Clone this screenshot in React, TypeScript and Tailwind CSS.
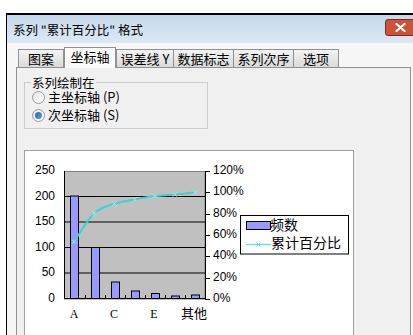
import React from "react";

const cjk = { fontFamily: '"Noto Sans CJK SC", "Liberation Sans", sans-serif' };

function Tab({ label, w, selected, className = "" }: { label: string; w: number; selected?: boolean; className?: string }) {
  if (selected) {
    return (
      <div
        className={`relative z-10 -mb-px flex h-[21px] items-start justify-center border border-b-0 border-[#8e9297] bg-[#fbfbfb] pt-[1px] text-[13px] leading-[16px] text-black ${className}`}
        style={{ width: w }}
      >
        {label}
      </div>
    );
  }
  return (
    <div
      className={`flex h-[18px] items-center justify-center border border-b-0 border-[#8e9297] bg-gradient-to-b from-[#f3f3f3] to-[#dadada] text-[13px] leading-[16px] text-black ${className}`}
      style={{ width: w }}
    >
      {label}
    </div>
  );
}

function Radio({ checked, label }: { checked?: boolean; label: string }) {
  return (
    <div className="flex h-[18px] items-center">
      <div className="ml-[7px] flex h-[13px] w-[13px] items-center justify-center rounded-full border border-[#9a9a9a] bg-gradient-to-br from-[#e4e4e4] to-[#ffffff]">
        {checked && <div className="h-[7px] w-[7px] rounded-full bg-gradient-to-br from-[#2a64a8] to-[#5fa0e0]" />}
      </div>
      <span className="ml-[3px] text-[13px] leading-[14px] text-black">{label}</span>
    </div>
  );
}

const pts: [number, number][] = [
  [74, 240.8],
  [94.2, 212.2],
  [114.4, 202.7],
  [134.5, 198.5],
  [154.6, 195.1],
  [174.8, 193.6],
  [195, 191.3],
];

function smoothPath(p: [number, number][]) {
  let d = `M${p[0][0]},${p[0][1]}`;
  for (let i = 0; i < p.length - 1; i++) {
    const p0 = p[i - 1] || p[i];
    const p1 = p[i];
    const p2 = p[i + 1];
    const p3 = p[i + 2] || p2;
    const c1x = p1[0] + (p2[0] - p0[0]) / 6;
    const c1y = p1[1] + (p2[1] - p0[1]) / 6;
    const c2x = p2[0] - (p3[0] - p1[0]) / 6;
    const c2y = p2[1] - (p3[1] - p1[1]) / 6;
    d += ` C${c1x},${c1y} ${c2x},${c2y} ${p2[0]},${p2[1]}`;
  }
  return d;
}

const bars = [
  { x: 70, top: 195 },
  { x: 91, top: 246.5 },
  { x: 111, top: 281 },
  { x: 131, top: 290 },
  { x: 151, top: 292.5 },
  { x: 171, top: 295 },
  { x: 191, top: 294 },
];

function Chart() {
  const grid = [195.5, 221, 246.5, 272];
  const leftLabels = [
    ["250", 170],
    ["200", 195.5],
    ["150", 221],
    ["100", 246.5],
    ["50", 272],
    ["0", 298],
  ];
  const rightTicks = [170, 191.3, 212.7, 234, 255.3, 276.7, 298];
  const rightLabels = ["120%", "100%", "80%", "60%", "40%", "20%", "0%"];
  return (
    <svg width={330} height={184} viewBox="24 149 330 184" className="block">
      <rect x={64.5} y={170.5} width={140.5} height={127.5} fill="#c0c0c0" stroke="#808080" />
      {grid.map((y) => (
        <line key={y} x1={64} x2={205} y1={y} y2={y} stroke="#000" strokeWidth={1} />
      ))}
      <line x1={64.5} x2={64.5} y1={170} y2={298} stroke="#000" />
      <line x1={205.5} x2={205.5} y1={170} y2={298} stroke="#000" />
      <line x1={64} x2={206} y1={297.5} y2={297.5} stroke="#000" />
      {[85, 105, 125, 145, 165, 185].map((x) => (
        <line key={x} x1={x + 0.5} x2={x + 0.5} y1={294} y2={298} stroke="#000" />
      ))}
      {rightTicks.map((y) => (
        <line key={y} x1={205} x2={210} y1={Math.round(y) + 0.5} y2={Math.round(y) + 0.5} stroke="#000" />
      ))}
      {bars.map((b) => (
        <rect key={b.x} x={b.x + 0.5} y={b.top} width={8} height={297.5 - b.top} fill="#9999ff" stroke="#000" />
      ))}
      <path d={smoothPath(pts)} fill="none" stroke="#38d4d4" strokeWidth={2} />
      {pts.map(([x, y]) => (
        <path key={x} d={`M${x - 2},${y - 2} L${x + 2},${y + 2} M${x - 2},${y + 2} L${x + 2},${y - 2}`} stroke="#9ff0f0" strokeWidth={1} />
      ))}
      {leftLabels.map(([t, y]) => (
        <text key={t as string} x={55} y={y as number} textAnchor="end" dominantBaseline="middle" fontSize={12} fontFamily='"Liberation Sans", sans-serif' fill="#000">
          {t}
        </text>
      ))}
      {rightLabels.map((t, i) => (
        <text key={t} x={213} y={rightTicks[i]} dominantBaseline="middle" fontSize={12} fontFamily='"Liberation Sans", sans-serif' fill="#000">
          {t}
        </text>
      ))}
      {[
        ["A", 74],
        ["C", 114],
        ["E", 154],
      ].map(([t, x]) => (
        <text key={t as string} x={x as number} y={314} textAnchor="middle" dominantBaseline="middle" fontSize={12} fontFamily='"Liberation Serif", serif' fill="#000">
          {t}
        </text>
      ))}
      <text x={194} y={313} textAnchor="middle" dominantBaseline="middle" fontSize={13} fontFamily='"Noto Sans CJK SC", sans-serif' fill="#000">
        其他
      </text>
      <rect x={240.5} y={214.5} width={108} height={38.5} fill="#fff" stroke="#000" />
      <rect x={246.5} y={220.5} width={24} height={8} fill="#9999ff" stroke="#000" />
      <text x={270} y={225} dominantBaseline="middle" fontSize={14} fontFamily='"Noto Sans CJK SC", sans-serif' fill="#000">
        频数
      </text>
      <line x1={246} x2={271} y1={243.5} y2={243.5} stroke="#5ee0e0" strokeWidth={1.2} />
      <path d="M256.5,241.5 L260.5,245.5 M256.5,245.5 L260.5,241.5" stroke="#5ee0e0" strokeWidth={1} />
      <text x={271} y={243} dominantBaseline="middle" fontSize={14} fontFamily='"Noto Sans CJK SC", sans-serif' fill="#000">
        累计百分比
      </text>
    </svg>
  );
}

export default function App() {
  return (
    <div className="h-[335px] w-[413px] overflow-hidden bg-white pl-[6px] pt-[13px]" style={cjk}>
      <div className="flex h-[340px] w-[420px] flex-col border-l border-t-2 border-black bg-[#f6f6f6]">
        <div className="relative flex h-[28px] items-center bg-gradient-to-b from-[#c5d8ec] to-[#dde8f4] pl-[6px] pt-[2px]">
          <span className="text-[12.5px] leading-[14px] text-black">{'系列 "累计百分比" 格式'}</span>
          <div className="absolute left-[378px] top-[4px] flex h-[17px] w-[30px] items-center justify-center rounded-[3px] border border-[#7a2c20] bg-[#cc5238]">
            <svg width="11" height="9" viewBox="0 0 11 9">
              <path d="M1.5,1 L9.5,8 M9.5,1 L1.5,8" stroke="#fff" strokeWidth={2.2} strokeLinecap="round" />
            </svg>
          </div>
        </div>
        <div className="pl-[9px]">
          <div className="flex h-[24px] items-end pl-[2px]">
            <Tab label="图案" w={46} />
            <Tab label="坐标轴" w={52} selected />
            <Tab label="误差线 Y" w={58} />
            <Tab label="数据标志" w={61} className="-ml-px" />
            <Tab label="系列次序" w={61} className="-ml-px" />
            <Tab label="选项" w={46} className="-ml-px" />
          </div>
          <div className="h-[280px] w-[395px] border border-[#8e9297] bg-[#f0f0f0] pl-[7px] pt-[9px]">
            <fieldset className="h-[52px] w-[184px] border border-[#c8cdd2] px-0 pb-0">
              <legend className="ml-[6px] px-[1px] text-[12.5px] leading-[11px] text-black">系列绘制在</legend>
              <div className="flex flex-col">
                <Radio label="主坐标轴 (P)" />
                <Radio label="次坐标轴 (S)" checked />
              </div>
            </fieldset>
            <div className="mt-[21px] h-[186px] w-[330px] border border-[#a0a0a0] bg-white">
              <div className="-ml-px -mt-px">
                <Chart />
              </div>
            </div>
          </div>
        </div>
      </div>
    </div>
  );
}
